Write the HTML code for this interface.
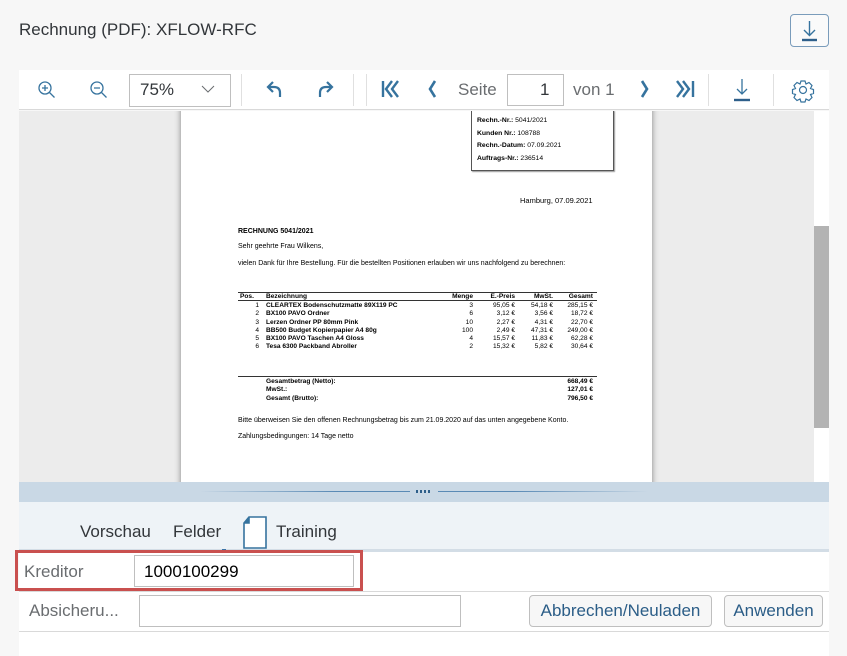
<!DOCTYPE html>
<html><head><meta charset="utf-8"><style>
*{box-sizing:border-box;margin:0;padding:0}
body{width:847px;height:656px;background:#f7f7f7;font-family:"Liberation Sans",sans-serif;position:relative;overflow:hidden;color:#32363a}
.a{position:absolute}
.t{white-space:nowrap}
.doc{font-size:7px;color:#000;line-height:1}
.tb{font-size:6.6px;line-height:8.3px}
.sep{position:absolute;top:74px;width:1px;height:32px;background:#e0e0e0}
</style></head><body>
<div class="a t" style="left:19px;top:20px;font-size:17px;color:#32363a">Rechnung (PDF): XFLOW-RFC</div>
<div class="a" style="left:790px;top:14px;width:39px;height:33px;border:1px solid #7a9cbb;border-radius:4px;background:#fafafa"></div>
<svg class="a" style="left:790px;top:14px" width="39" height="33"><path d="M19.5 7v14M14 16l5.5 5.5L25 16" stroke="#36739e" stroke-width="1.4" fill="none"/><path d="M12 26h15" stroke="#2e5f8a" stroke-width="2.4"/></svg>

<div class="a" style="left:19px;top:70px;width:810px;height:40px;background:#fff;border-bottom:1px solid #d9d9d9"></div>
<svg class="a" style="left:19px;top:70px" width="810" height="40">
<g stroke="#36739e" stroke-width="1.3" fill="none">
<circle cx="26" cy="18" r="6"/><path d="M30.5 22.5l5 5M23 18h6M26 15v6"/>
<circle cx="78" cy="18" r="6"/><path d="M82.5 22.5l5 5M75 18h6"/>
<path d="M254 12l-5 5 5 5M249 17h6c4 0 6 2 6 6v4" stroke-width="2.2"/>
<path d="M308 12l5 5-5 5M313 17h-6c-4 0-6 2-6 6v4" stroke-width="2.2"/>
<path d="M364 11v16M373 11l-6 8 6 8M379 11l-6 8 6 8" stroke-width="2.4"/>
<path d="M416 11l-5 8 5 8" stroke-width="2.6"/>
<path d="M623 11l5 8-5 8" stroke-width="2.6"/>
<path d="M658 11l6 8-6 8M664 11l6 8-6 8M674 11v16" stroke-width="2.4"/>
<path d="M723 9v15M718 19l5 5 5-5"/>
<path d="M183 16l6 6 6-6" stroke="#6a6d70" stroke-width="1"/>
</g>
<path d="M715 30h16" stroke="#2e5f8a" stroke-width="2.4"/>
<g transform="translate(784 20)" stroke="#36739e" stroke-width="1.2" fill="none"><circle r="3.5"/><path d="M-2 -9h4l1 3 3-1.5 3 3-1.5 3 3 1v4l-3 1 1.5 3-3 3-3-1.5-1 3h-4l-1-3-3 1.5-3-3 1.5-3-3-1v-4l3-1-1.5-3 3-3 3 1.5z"/></g>
</svg>
<div class="a" style="left:129px;top:74px;width:102px;height:33px;border:1px solid #bfbfbf"></div>
<div class="a t" style="left:140px;top:80px;font-size:17px">75%</div>
<div class="sep" style="left:241px"></div><div class="sep" style="left:353px"></div><div class="sep" style="left:366px"></div><div class="sep" style="left:708px"></div><div class="sep" style="left:773px"></div>
<div class="a t" style="left:458px;top:80px;font-size:17px;color:#6a6d70">Seite</div>
<div class="a" style="left:507px;top:74px;width:57px;height:32px;border:1px solid #bfbfbf"></div>
<div class="a t" style="left:540px;top:80px;font-size:17px">1</div>
<div class="a t" style="left:573px;top:80px;font-size:17px;color:#6a6d70">von 1</div>

<div class="a" style="left:19px;top:111px;width:795px;height:371px;background:#ececec;overflow:hidden">
 <div class="a" style="left:162px;top:-10px;width:471px;height:400px;background:#fff;box-shadow:0 0 6px rgba(0,0,0,.45)">
  <div class="a" style="left:290px;top:9px;width:143px;height:61px;border:1px solid #555;box-shadow:1px 1px 1px #999"></div>
  <div class="a doc t" style="left:296px;top:14px;line-height:12.6px;font-size:6.8px"><b>Rechn.-Nr.:</b> 5041/2021<br><b>Kunden Nr.:</b> 108788<br><b>Rechn.-Datum:</b> 07.09.2021<br><b>Auftrags-Nr.:</b> 236514</div>
  <div class="a doc t" style="left:339px;top:96px;font-size:7.5px">Hamburg, 07.09.2021</div>
  <div class="a doc t" style="left:57px;top:127px;font-size:7px"><b>RECHNUNG 5041/2021</b></div>
  <div class="a doc t" style="left:57px;top:142px">Sehr geehrte Frau Wilkens,</div>
  <div class="a doc t" style="left:57px;top:159px">vielen Dank für Ihre Bestellung. Für die bestellten Positionen erlauben wir uns nachfolgend zu berechnen:</div>
  <div class="a" style="left:57px;top:191px;width:359px;border-top:1px solid #333"></div>
  <div class="a" style="left:57px;top:199px;width:359px;border-top:1px solid #333"></div>
  <div class="a doc t tb" style="left:59px;top:191.5px;font-weight:bold">Pos.</div>
  <div class="a doc t tb" style="left:85px;top:191.5px;font-weight:bold">Bezeichnung</div>
  <div class="a doc t tb" style="left:252px;top:191.5px;text-align:right;width:40px;font-weight:bold">Menge</div>
  <div class="a doc t tb" style="left:294px;top:191.5px;text-align:right;width:40px;font-weight:bold">E.-Preis</div>
  <div class="a doc t tb" style="left:334px;top:191.5px;text-align:right;width:38px;font-weight:bold">MwSt.</div>
  <div class="a doc t tb" style="left:370px;top:191.5px;text-align:right;width:42px;font-weight:bold">Gesamt</div>
  <div class="a doc t tb" style="left:85px;top:201px;font-weight:bold">CLEARTEX Bodenschutzmatte 89X119 PC<br>BX100 PAVO Ordner<br>Lerzen Ordner PP 80mm Pink<br>BB500 Budget Kopierpapier A4 80g<br>BX100 PAVO Taschen A4 Gloss<br>Tesa 6300 Packband Abroller</div>
  <div class="a doc t tb" style="left:60px;top:201px;text-align:right;width:18px">1<br>2<br>3<br>4<br>5<br>6</div>
  <div class="a doc t tb" style="left:252px;top:201px;text-align:right;width:40px">3<br>6<br>10<br>100<br>4<br>2</div>
  <div class="a doc t tb" style="left:294px;top:201px;text-align:right;width:40px">95,05 €<br>3,12 €<br>2,27 €<br>2,49 €<br>15,57 €<br>15,32 €</div>
  <div class="a doc t tb" style="left:334px;top:201px;text-align:right;width:38px">54,18 €<br>3,56 €<br>4,31 €<br>47,31 €<br>11,83 €<br>5,82 €</div>
  <div class="a doc t tb" style="left:370px;top:201px;text-align:right;width:42px">285,15 €<br>18,72 €<br>22,70 €<br>249,00 €<br>62,28 €<br>30,64 €</div>
  <div class="a" style="left:57px;top:275px;width:359px;border-top:1px solid #333"></div>
  <div class="a doc t tb" style="left:85px;top:277px;font-weight:bold">Gesamtbetrag (Netto):<br>MwSt.:<br>Gesamt (Brutto):</div>
  <div class="a doc t tb" style="left:370px;top:277px;font-weight:bold;text-align:right;width:42px">668,49 €<br>127,01 €<br>796,50 €</div>
  <div class="a doc t" style="left:57px;top:316px">Bitte überweisen Sie den offenen Rechnungsbetrag bis zum 21.09.2020 auf das unten angegebene Konto.</div>
  <div class="a doc t" style="left:57px;top:332px">Zahlungsbedingungen: 14 Tage netto</div>
 </div>
</div>
<div class="a" style="left:814px;top:111px;width:15px;height:371px;background:#fff"></div>
<div class="a" style="left:814px;top:226px;width:15px;height:202px;background:#b3b3b3"></div>

<div class="a" style="left:19px;top:482px;width:810px;height:20px;background:#c9d8e5"></div>
<div class="a" style="left:200px;top:491px;width:448px;height:1px;background:linear-gradient(90deg,transparent,#5a8ab5 30%,#5a8ab5 70%,transparent)"></div>
<div class="a" style="left:410px;top:487px;width:28px;height:8px;background:#c9d8e5"></div>
<div class="a" style="left:416px;top:490px;width:16px;height:3px;background:repeating-linear-gradient(90deg,#2e5f8a 0 2px,transparent 2px 4px)"></div>

<div class="a" style="left:19px;top:502px;width:810px;height:48px;background:#eef3f7"></div>
<div class="a t" style="left:80px;top:522px;font-size:17px">Vorschau</div>
<div class="a t" style="left:173px;top:522px;font-size:17px">Felder</div>
<svg class="a" style="left:242px;top:516px" width="26" height="33"><path d="M7 1h17v31H2V7z M7 1v6H2" stroke="#36739e" stroke-width="1.6" fill="#fff"/><path d="M2 7l5-6v6z" fill="#36739e"/></svg>
<div class="a t" style="left:276px;top:522px;font-size:17px">Training</div>
<div class="a" style="left:19px;top:551px;width:810px;height:105px;background:#fff"></div>
<div class="a" style="left:19px;top:549px;width:810px;height:3px;background:#d3dde6"></div>
<div class="a" style="left:222px;top:549px;width:4px;height:3px;background:#3d74a8"></div>

<div class="a" style="left:15px;top:550px;width:348px;height:41px;border:3px solid #c9504f"></div>
<div class="a t" style="left:24px;top:562px;font-size:17px;color:#6a6d70">Kreditor</div>
<div class="a" style="left:134px;top:555px;width:220px;height:32px;border:1px solid #bfbfbf"></div>
<div class="a t" style="left:144px;top:562px;font-size:17px;color:#000">1000100299</div>
<div class="a" style="left:19px;top:591px;width:810px;height:1px;background:#d9d9d9"></div>
<div class="a t" style="left:29px;top:601px;font-size:17px;color:#6a6d70">Absicheru...</div>
<div class="a" style="left:139px;top:595px;width:322px;height:32px;border:1px solid #bfbfbf"></div>
<div class="a t" style="left:529px;top:595px;width:183px;height:32px;border:1px solid #bfbfbf;border-radius:4px;background:#f7f7f7;font-size:17px;color:#2b5d87;text-align:center;line-height:30px">Abbrechen/Neuladen</div>
<div class="a t" style="left:724px;top:595px;width:99px;height:32px;border:1px solid #bfbfbf;border-radius:4px;background:#f7f7f7;font-size:17px;color:#2b5d87;text-align:center;line-height:30px">Anwenden</div>
<div class="a" style="left:19px;top:631px;width:810px;height:1px;background:#d9d9d9"></div>
</body></html>
